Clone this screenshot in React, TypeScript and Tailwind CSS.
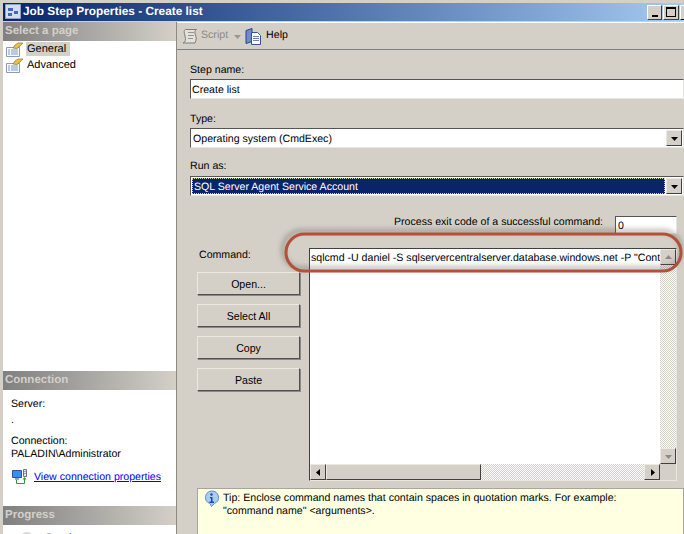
const sans = "font-['Liberation_Sans',Arial,sans-serif]";

function PageIcon() {
  return (
    <svg width="17" height="15" viewBox="0 0 17 15" className="shrink-0">
      <path d="M0.500 5.500h13v9h-13z" fill="#fafbfd" stroke="#8b9ab5" />
      <path d="M2 8h2M5 8h7M2 10h2M5 10h7M2 12h2M5 12h7" stroke="#7d97c6" />
      <path d="M7 6l2-3 3-2h5l-3 3-3 2.500z" fill="#eec04a" stroke="#8a7230" strokeWidth="0.7" />
    </svg>
  );
}

function ScriptIcon() {
  return (
    <svg width="17" height="17" viewBox="0 0 17 17">
      <path d="M4.500 1.500h11c-2 1-2 3-1 5.500s1 5-.5 8h-12c2.500-1 3-3 2-7s-1.500-5.500.500-6.500z" fill="#e4e1da" stroke="#7f7c76" />
      <path d="M7 4.500h6M7 7.500h6M7 10.500h5" stroke="#98958e" />
    </svg>
  );
}

function HelpIcon() {
  return (
    <svg width="16" height="17" viewBox="0 0 16 17">
      <path d="M1 2.500l6-2v13l-6 2z" fill="#6d8bd0" stroke="#2b4384" />
      <path d="M6.500 4.500h6l3 3v9h-9z" fill="#fff" stroke="#39508f" />
      <path d="M8 8.500h6M8 10.500h6M8 12.500h6" stroke="#6d82b8" />
    </svg>
  );
}

function ConnectionIcon() {
  return (
    <svg width="16" height="16" viewBox="0 0 16 16" className="shrink-0">
      <path d="M0.500 1.500h9v7h-9z" fill="#3d8ee8" stroke="#2855a8" />
      <path d="M3 9h4v2H3z" fill="#8aa4cf" />
      <path d="M11.500 0.500h3v7h-3z" fill="#e6e8ee" stroke="#6a7488" />
      <path d="M12.500 2.500h1M12.500 4.500h1" stroke="#555" />
      <path d="M4.500 11v3.500h8V10" fill="none" stroke="#2f9a35" />
      <path d="M10.500 10.500l2-2.500 2 2.500z" fill="#2f9a35" />
    </svg>
  );
}

function InfoIcon() {
  return (
    <svg width="17" height="17" viewBox="0 0 17 17" className="shrink-0">
      <path d="M8.500 1a7 6.500 0 0 1 3 12.400L8.500 16.500 7 13.500A7 6.500 0 0 1 8.500 1z" fill="#a8cdf0" stroke="#5e8fc8" />
      <circle cx="8.500" cy="4.500" r="1.200" fill="#1d46a8" />
      <path d="M7 7h2.500v4.500H11V13H6.500v-1.500H8V8.300H7z" fill="#1d46a8" />
    </svg>
  );
}

function Arrow({ dir, color = "#000" }: { dir: "up" | "down" | "left" | "right"; color?: string }) {
  const d = {
    up: "M0 5l3.500-4 3.500 4z",
    down: "M0 2l3.500 4 3.500-4z",
    left: "M5 0v7L1 3.500z",
    right: "M2 0v7l4-3.500z",
  }[dir];
  return (
    <svg width="7" height="7" viewBox="0 0 7 7">
      <path d={d} fill={color} />
    </svg>
  );
}

function ScrollButton({ dir, color }: { dir: "up" | "down" | "left" | "right"; color?: string }) {
  return (
    <div className="w-[16px] h-[16px] shrink-0 flex items-center justify-center bg-[#d4d0c8] border border-t-[#ece9e2] border-l-[#ece9e2] border-r-[#404040] border-b-[#404040]">
      <Arrow dir={dir} color={color} />
    </div>
  );
}

function Combo({ value, selected }: { value: string; selected?: boolean }) {
  return (
    <div className="h-[20px] flex bg-white border border-t-[#555] border-l-[#555] border-r-[#e8e6e0] border-b-[#e8e6e0] p-px">
      <div className={`flex-1 flex items-center pl-px pt-px mr-px ${selected ? "bg-[#0a246a] text-white border border-dotted border-[#d8d2a8]" : "text-black"}`}>
        {value}
      </div>
      <ScrollButton dir="down" />
    </div>
  );
}

function ActionButton({ label }: { label: string }) {
  return (
    <button className="w-[103px] h-[23px] bg-[#d4d0c8] text-black border border-t-[#ece9e2] border-l-[#ece9e2] border-r-[#505050] border-b-[#505050] shadow-[1px_1px_0_#8a8a86]">
      {label}
    </button>
  );
}

function SideHeader({ title }: { title: string }) {
  return (
    <div className="h-[19px] shrink-0 flex items-center pl-[2px] bg-gradient-to-r from-[#808080] to-[#d4d0c8] text-[11.500px] font-bold text-[#d4d0c8]">
      {title}
    </div>
  );
}

export default function App() {
  return (
    <div className={`${sans} relative w-[684px] h-[534px] overflow-hidden bg-[#d4d0c8] pt-[3px] text-black text-[10.600px] [text-rendering:geometricPrecision]`}>
      {/* Title bar */}
      <div className="ml-[3px] h-[18px] flex items-center justify-between bg-gradient-to-r from-[#0a246a] to-[#a6caf0]">
        <div className="flex items-center gap-[2px] pl-[2px]">
          <svg width="16" height="15" viewBox="0 0 16 15">
            <path d="M0.500 0.500h15v14h-15z" fill="#d5dcee" stroke="#8fa0c8" />
            <path d="M3 4h5v3H3zM9 7h4v3H9zM3 9h4v3H3z" fill="#3f68b8" />
          </svg>
          <span className="text-[11.850px] font-bold text-white">Job Step Properties - Create list</span>
        </div>
        <div className="flex gap-[1px] -mr-[11px]">
          <div className="w-[15px] h-[15px] bg-[#d4d0c8] border border-t-white border-l-white border-r-[#404040] border-b-[#404040] flex items-end justify-center pb-[2px]">
            <div className="w-[6px] h-[2px] bg-black" />
          </div>
          <div className="w-[16px] h-[15px] bg-[#d4d0c8] border border-t-white border-l-white border-r-[#404040] border-b-[#404040] flex items-center justify-center">
            <div className="w-[10px] h-[10px] border border-t-2 border-black" />
          </div>
          <div className="w-[15px] h-[15px] bg-[#d4d0c8] border border-t-white border-l-white" />
        </div>
      </div>

      <div className="flex h-[513px] pl-[3px] pt-[1px]">
        {/* Left panel */}
        <div className="w-[174px] flex flex-col border-r border-[#8d8a84] bg-white">
          <SideHeader title="Select a page" />
          <div className="h-[330px] shrink-0 pl-[3px] text-[11px]">
            <div className="h-[16px] flex items-center gap-[3px]">
              <PageIcon />
              <span className="bg-[#d4d0c8] pl-[1px] pr-[4px] leading-[14px]">General</span>
            </div>
            <div className="h-[16px] flex items-center gap-[4px]">
              <PageIcon />
              <span>Advanced</span>
            </div>
          </div>
          <SideHeader title="Connection" />
          <div className="h-[116px] shrink-0 pl-[8px] leading-[13px] flex flex-col">
            <span className="mt-[8px]">Server:</span>
            <span className="mt-[3px]">.</span>
            <span className="mt-[8px]">Connection:</span>
            <span>PALADIN\Administrator</span>
            <div className="flex items-center gap-[6px] mt-[8px] ml-[1px]">
              <ConnectionIcon />
              <span className="text-[#0000ff] underline whitespace-nowrap">View connection properties</span>
            </div>
          </div>
          <SideHeader title="Progress" />
          <div className="flex items-start gap-[12px] pl-[17px] pt-[7px] leading-[13px]">
            <div className="w-[14px] h-[14px] shrink-0 rounded-full bg-[#d9d9d9]" />
            <span>Ready</span>
          </div>
        </div>

        {/* Right panel */}
        <div className="flex-1 min-w-0 flex flex-col">
          {/* Toolbar */}
          <div className="h-[28px] shrink-0 flex items-center pl-[4px] border-t border-t-white border-b border-b-[#808080]">
            <ScriptIcon />
            <span className="ml-[3px] text-[#8d8a84]">Script</span>
            <span className="ml-[6px]"><Arrow dir="down" color="#9a9791" /></span>
            <span className="ml-[4px]"><HelpIcon /></span>
            <span className="ml-[5px]">Help</span>
          </div>

          {/* Form */}
          <div className="flex-1 pl-[13px] pt-[13px] leading-[14px]">
            <div className="mb-[2px]">Step name:</div>
            <div className="h-[20px] flex items-center pl-[1px] pt-px bg-white border border-t-[#555] border-l-[#555] border-r-[#e8e6e0] border-b-[#e8e6e0]">
              Create list
            </div>
            <div className="mt-[13px]">Type:</div>
            <div className="mt-[2px]">
              <Combo value="Operating system (CmdExec)" />
            </div>
            <div className="mt-[11px]">Run as:</div>
            <div className="mt-[3px]">
              <Combo value="SQL Server Agent Service Account" selected />
            </div>

            <div className="mt-[20px] mr-[7px] flex justify-end gap-[12px]">
              <span className="-mt-[1px]">Process exit code of a successful command:</span>
              <div className="w-[62px] h-[18px] pl-[2px] pt-[2px] bg-white border border-t-[#555] border-l-[#555] border-r-[#e8e6e0] border-b-[#e8e6e0]">0</div>
            </div>

            <div className="mt-[14px] mr-[7px] flex">
              <div className="w-[119px] shrink-0 flex flex-col pl-[7px]">
                <div className="pl-[2px]">Command:</div>
                <div className="mt-[10px] flex flex-col gap-[9px]">
                  <ActionButton label="Open..." />
                  <ActionButton label="Select All" />
                  <ActionButton label="Copy" />
                  <ActionButton label="Paste" />
                </div>
              </div>
              <div className="flex-1 min-w-0 h-[233px] flex flex-col bg-white border border-t-[#404040] border-l-[#404040] border-r-[#e8e6e0] border-b-[#e8e6e0]">
                <div className="flex-1 flex min-h-0">
                  <div className="flex-1 min-w-0 overflow-hidden whitespace-nowrap pt-[2px] pl-[1px]">
                    {'sqlcmd -U daniel -S sqlservercentralserver.database.windows.net -P "Cont'}
                  </div>
                  <div className="w-[16px] shrink-0 flex flex-col justify-between bg-[repeating-conic-gradient(#d4d0c8_0_25%,#fff_0_50%)] bg-[length:2px_2px]">
                    <ScrollButton dir="up" color="#8d8a84" />
                    <ScrollButton dir="down" color="#8d8a84" />
                  </div>
                </div>
                <div className="h-[16px] shrink-0 flex bg-[#d4d0c8]">
                  <div className="flex-1 min-w-0 flex bg-[repeating-conic-gradient(#d4d0c8_0_25%,#fff_0_50%)] bg-[length:2px_2px]">
                    <ScrollButton dir="left" />
                    <div className="w-[155px] bg-[#d4d0c8] border border-t-[#ece9e2] border-l-[#ece9e2] border-r-[#404040] border-b-[#404040]" />
                    <div className="flex-1" />
                    <ScrollButton dir="right" />
                  </div>
                  <div className="w-[16px] shrink-0" />
                </div>
              </div>
            </div>

            {/* Tip */}
            <div className="mt-[7px] ml-[7px] h-[60px] bg-[#ffffe1] border border-[#a8a59e] pl-[5px] pt-[1px] flex gap-[3px] leading-[13px]">
              <InfoIcon />
              <div className="pt-[2px]">
                Tip: Enclose command names that contain spaces in quotation marks. For example:
                <br />
                {'"command name" <arguments>.'}
              </div>
            </div>
          </div>
        </div>
      </div>

      {/* Red annotation ring */}
      <svg width="684" height="534" className="absolute left-0 top-0 pointer-events-none">
        <defs>
          <filter id="ring-shadow" x="-10%" y="-30%" width="120%" height="160%">
            <feGaussianBlur stdDeviation="2.500" />
          </filter>
        </defs>
        <rect x="283" y="231" width="398" height="37" rx="18" fill="none" stroke="#55554f" strokeOpacity="0.55" strokeWidth="3" filter="url(#ring-shadow)" />
        <rect x="286" y="234" width="395" height="37" rx="18.500" fill="none" stroke="#b4503a" strokeWidth="3" />
      </svg>
    </div>
  );
}
